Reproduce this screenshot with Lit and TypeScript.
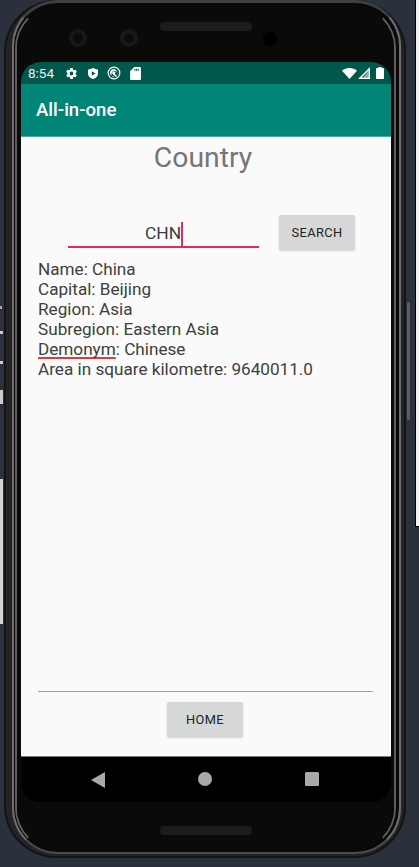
import { LitElement, html, css } from "lit";
import { customElement } from "lit/decorators.js";

@customElement("app-root")
export class AppRoot extends LitElement {
  static styles = css`
    :host { display: flex; width: 419px; height: 867px; background: #2b303d; overflow: hidden; font-family: Roboto, "Liberation Sans", sans-serif; }
    .left { width: 4px; flex: none; display: flex; flex-direction: column; align-items: flex-start; }
    .mark { background: #c9cbcd; width: 3px; }
    .m1 { height: 3px; margin-top: 306px; width: 2px; background: #aaa; }
    .m2 { height: 3px; margin-top: 22px; }
    .m3 { height: 3px; margin-top: 27px; }
    .m4 { height: 14px; margin-top: 26px; }
    .m5 { height: 145px; margin-top: 75px; background: #d3d4d5; }
    .phone { width: 402px; height: 858px; flex: none; box-sizing: border-box; padding: 0 5px 4px 8px; background: #242424; border-radius: 52px; display: flex; box-shadow: inset 0 0 0 2px #141414; }
    .ring-a { flex: 1; display: flex; box-sizing: border-box; border: 2px solid #6e6e6e; border-top: 3px solid #3f3f3f; border-bottom: 2px solid #4a4a4a; border-radius: 46px; padding: 2px 3px 1px 1px; background: #090909; }
    .ring-b { flex: 1; display: flex; box-sizing: border-box; border: 2px solid #5e5e5e; border-top-color: #0a0a0a; border-bottom-color: #0a0a0a; border-radius: 43px; }
    .body { flex: 1; box-sizing: border-box; padding: 0 3px 0 4px; background: #0a0a0a; border-radius: 41px; display: flex; flex-direction: column; }
    .bezel-top { height: 55px; flex: none; display: flex; align-items: flex-start; padding-left: 48px; }
    .cam { width: 18px; height: 18px; margin-top: 22px; border-radius: 50%; background: radial-gradient(circle, #0a0b0d 0 4px, #171a1e 6px, #14171a 9px); }
    .cam + .cam { margin-left: 33px; }
    .speaker { width: 92px; height: 9px; border-radius: 4px; background: #1c1c1c; }
    .speaker.top { margin: 15px 0 0 22px; }
    .hole { width: 14px; height: 14px; margin: 25px 0 0 11px; border-radius: 50%; background: #000; }
    .screen { width: 370px; height: 740px; flex: none; border-radius: 20px; overflow: hidden; display: flex; flex-direction: column; background: #000; }
    .status { height: 22px; flex: none; background: #00574b; display: flex; align-items: center; color: #e8f2f0; font-size: 13.5px; padding-left: 7px; }
    .status svg { display: block; fill: #fff; flex: none; }
    .time { width: 37px; }
    .appbar { height: 52px; flex: none; background: #008577; border-bottom: 1px solid #4fa79d; box-sizing: content-box; display: flex; align-items: center; padding-left: 15px; color: #fff; font-size: 18.6px; font-weight: 500; }
    .content { flex: 1; background: #fafafa; display: flex; flex-direction: column; min-height: 0; }
    .title { text-align: center; padding-right: 6px; margin-top: 4px; font-size: 28.3px; line-height: 33px; color: #757575; }
    .form { display: flex; align-items: flex-start; margin-top: 41px; padding-left: 47px; }
    .input { width: 191px; height: 33px; box-sizing: border-box; border-bottom: 2px solid #dd2a68; display: flex; justify-content: center; padding-top: 7px; padding-left: 1px; font-size: 17.4px; line-height: 23px; color: #3c3c3c; }
    .caret { width: 2px; height: 24px; flex: none; background: #dd2a68; }
    .btn { width: 76px; height: 35px; flex: none; display: flex; align-items: center; justify-content: center; background: #d6d7d7; border-radius: 2px; font-size: 12.8px; font-weight: 400; letter-spacing: .4px; color: #222; box-shadow: 0 1px 2px rgba(0,0,0,.16); }
    .form .btn { margin-left: 20px; }
    .details { margin-top: 10px; padding-left: 17px; font-size: 17.15px; line-height: 19.9px; color: #404040; }
    .squiggle { text-decoration: underline; text-decoration-color: #e53935; text-underline-offset: 2px; text-decoration-thickness: 1.5px; text-decoration-skip-ink: none; }
    .spacer { flex: 1; }
    .rule { height: 1.5px; margin: 0 18px 10px 17px; background: #a3a3a3; }
    .content > .btn { margin: 0 0 19px 146px; }
    .nav { height: 45px; flex: none; border-top: 1px solid #7a7a7a; background: #000; display: flex; align-items: flex-start; padding-left: 70px; box-sizing: content-box; }
    .nav svg { display: block; flex: none; margin-top: 15px; fill: #a9a9a9; }
    .nav .circle { margin-left: 93px; }
    .nav .square { margin-left: 93px; }
    .bezel-bottom { flex: 1; padding-left: 139px; padding-top: 24px; }
    .right { flex: 1; display: flex; min-width: 0; }
    .power { width: 3px; height: 118px; margin: 302px 0 0 1px; background: #5a5d63; border-radius: 2px; flex: none; }
    .panel { width: 3px; height: 526px; margin-left: 5px; flex: none; background: #f1f1f1; border-left: 1px solid #000; border-bottom: 1px solid #000; }
  `;

  render() {
    return html`
      <div class="left">
        <div class="mark m1"></div><div class="mark m2"></div><div class="mark m3"></div><div class="mark m4"></div><div class="mark m5"></div>
      </div>
      <div class="phone"><div class="ring-a"><div class="ring-b"><div class="body">
        <div class="bezel-top">
          <div class="cam"></div><div class="cam"></div>
          <div class="speaker top"></div><div class="hole"></div>
        </div>
        <div class="screen">
          <div class="status">
            <span class="time">8:54</span>
            <svg width="13" height="13" viewBox="0 0 24 24" style="margin-right:9px"><path d="M19.4 13c.05-.3.1-.65.1-1s-.03-.7-.1-1l2.1-1.65c.2-.15.25-.42.12-.64l-2-3.46c-.12-.22-.4-.3-.6-.22l-2.5 1c-.5-.4-1.1-.72-1.7-.98l-.37-2.65A.5.5 0 0 0 14 2h-4a.5.5 0 0 0-.5.42l-.37 2.65c-.6.26-1.2.58-1.7.98l-2.5-1a.5.5 0 0 0-.6.22l-2 3.46c-.13.22-.07.49.12.64L4.6 11c-.06.3-.1.66-.1 1s.03.7.1 1l-2.1 1.65c-.2.15-.25.42-.12.64l2 3.46c.12.22.4.3.6.22l2.5-1c.5.4 1.1.72 1.7.98l.37 2.65c.04.24.25.42.5.42h4c.25 0 .46-.18.5-.42l.37-2.65c.6-.26 1.2-.58 1.7-.98l2.5 1c.23.08.48 0 .6-.22l2-3.46c.13-.22.07-.49-.12-.64L19.4 13zM12 15.5a3.5 3.5 0 1 1 0-7 3.5 3.5 0 0 1 0 7z"/></svg>
            <svg width="12" height="13" viewBox="0 0 24 24" style="margin-right:8px"><path fill-rule="evenodd" d="M12 1 2 4.500V12c0 5.500 4.200 10 10 11 5.800-1 10-5.500 10-11V4.500L12 1zM9.500 7.500v9l7.500-4.500-7.500-4.500z"/></svg>
            <svg width="14" height="14" viewBox="0 0 24 24" style="margin-right:9px"><path fill-rule="evenodd" d="M12 1a11 11 0 1 0 0 22 11 11 0 0 0 0-22zm0 2a9 9 0 1 1 0 18 9 9 0 0 1 0-18z"/><path fill-rule="evenodd" d="M12 5a7 7 0 0 0-5.500 11.300L8 15a5 5 0 1 1 2 2.500L8.500 19A7 7 0 1 0 12 5z"/><path d="M12 9a3 3 0 0 0-1.500 5.600l5 4.400 1.500-1.500-3.500-3.500A3 3 0 0 0 12 9z"/></svg>
            <svg width="11" height="13" viewBox="0 0 20 24"><path fill-rule="evenodd" d="M18 0H8L0 8v14c0 1.100.9 2 2 2h16c1.100 0 2-.9 2-2V2c0-1.100-.9-2-2-2zM10 7H8V3h2v4zm3 0h-2V3h2v4zm3 0h-2V3h2v4z"/></svg>
            <span class="spacer"></span>
            <svg width="15" height="11" viewBox="0 0 15 11" style="margin-right:1px"><path d="M7.500 11 0 2.800C2 1 4.600 0 7.500 0S13 1 15 2.800L7.500 11z"/></svg>
            <svg width="12" height="12" viewBox="0 0 12 12" style="margin-right:6px"><path fill-rule="evenodd" d="M12 0v12H0L12 0zm-1.500 3.600L3.600 10.500h6.900V3.600z"/><path d="M10.500 4 5 10.500h5.500z" fill-opacity=".55"/></svg>
            <svg width="8" height="12" viewBox="0 0 8 12" style="margin-right:7px"><path d="M2.500 0h3v1H7c.6 0 1 .4 1 1v9c0 .6-.4 1-1 1H1c-.6 0-1-.4-1-1V2c0-.6.4-1 1-1h1.500V0z"/></svg>
          </div>
          <div class="appbar">All-in-one</div>
          <div class="content">
            <div class="title">Country</div>
            <div class="form">
              <div class="input"><span>CHN</span><span class="caret"></span></div>
              <div class="btn">SEARCH</div>
            </div>
            <div class="details">
              <div>Name: China</div>
              <div>Capital: Beijing</div>
              <div>Region: Asia</div>
              <div>Subregion: Eastern Asia</div>
              <div><span class="squiggle">Demonym</span>: Chinese</div>
              <div>Area in square kilometre: 9640011.0</div>
            </div>
            <div class="spacer"></div>
            <div class="rule"></div>
            <div class="btn">HOME</div>
          </div>
          <div class="nav">
            <svg width="14" height="16" viewBox="0 0 14 16"><path d="M14 0v16L0 8z"/></svg>
            <svg class="circle" width="14" height="14" viewBox="0 0 14 14"><circle cx="7" cy="7" r="7"/></svg>
            <svg class="square" width="14" height="14" viewBox="0 0 14 14"><rect width="14" height="14" rx="1.500"/></svg>
          </div>
        </div>
        <div class="bezel-bottom"><div class="speaker"></div></div>
      </div></div></div></div>
      <div class="right"><div class="power"></div><div class="panel"></div></div>
    `;
  }
}
